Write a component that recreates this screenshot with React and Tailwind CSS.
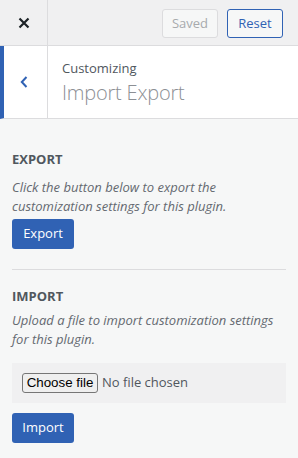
import React from "react";

function CloseIcon() {
  return (
    <svg width="12" height="12" viewBox="0 0 12 12" fill="none">
      <path d="M1.5 1.5l9 9M10.5 1.5l-9 9" stroke="#1d2327" strokeWidth="2.2" />
    </svg>
  );
}

function BackIcon() {
  return (
    <svg width="8" height="12" viewBox="0 0 8 12" fill="none">
      <path d="M6.5 1L1.8 6l4.7 5" stroke="#3062b4" strokeWidth="2" />
    </svg>
  );
}

export default function App() {
  return (
    <div className="w-[298px] h-[458px] overflow-hidden bg-[#f6f7f7] font-['Open_Sans',sans-serif] text-[13px] text-[#50575e]">
      {/* Top bar */}
      <div className="flex h-[46px] bg-[#f0f0f1] border-b border-[#dcdcde]">
        <button className="w-[48px] h-[45px] flex items-center justify-center border-r border-[#dcdcde]">
          <CloseIcon />
        </button>
        <div className="flex-1 flex justify-end items-start pt-[9px] pr-[15px] gap-[9px]">
          <button className="w-[56px] h-[29px] rounded-[3px] border border-[#dcdcde] bg-[#f6f7f7] text-[#a7aaad] text-[13px]">
            Saved
          </button>
          <button className="w-[56px] h-[29px] rounded-[3px] border border-[#3062b4] bg-[#f6f7f7] text-[#3062b4] text-[13px]">
            Reset
          </button>
        </div>
      </div>

      {/* Section header */}
      <div className="flex h-[73px] bg-white border-l-4 border-l-[#3062b4] border-b border-b-[#dcdcde]">
        <button className="w-[44px] h-full flex items-center justify-center border-r border-[#dcdcde] pr-[3px]">
          <BackIcon />
        </button>
        <div className="pl-[14px] pt-[13px]">
          <div className="text-[13px] leading-[18px] text-[#50575e]">Customizing</div>
          <div className="text-[20px] leading-[26px] font-light text-[#8c8f94] mt-[3px] tracking-[-0.2px]">Import Export</div>
        </div>
      </div>

      {/* Content */}
      <div className="px-[12px] pt-[31px]">
        <div className="font-bold leading-[18px]">EXPORT</div>
        <p className="italic text-[#646970] leading-[18.5px] mt-[10px]">
          Click the button below to export the customization settings for this plugin.
        </p>
        <button className="mt-[4px] h-[30px] w-[62px] rounded-[3px] bg-[#3062b4] text-white text-[13px]">
          Export
        </button>

        <hr className="mt-[20px] border-t border-[#dcdcde]" />

        <div className="mt-[17px] font-bold leading-[18px]">IMPORT</div>
        <p className="italic text-[#646970] leading-[18.5px] mt-[6px]">
          Upload a file to import customization settings for this plugin.
        </p>
        <label className="mt-[15px] h-[40px] bg-[#f0f0f1] flex items-center px-[10px] gap-[4px]">
          <input type="file" className="hidden" />
          <span className="h-[20px] w-[76px] flex items-center justify-center border border-[#767676] rounded-[3px] bg-[#efefef] text-black font-['Liberation_Sans',sans-serif] text-[13.33px]">
            Choose file
          </span>
          <span className="text-[13px] text-[#50575e]">No file chosen</span>
        </label>
        <button className="mt-[10px] h-[30px] w-[62px] rounded-[3px] bg-[#3062b4] text-white text-[13px]">
          Import
        </button>
      </div>
    </div>
  );
}
